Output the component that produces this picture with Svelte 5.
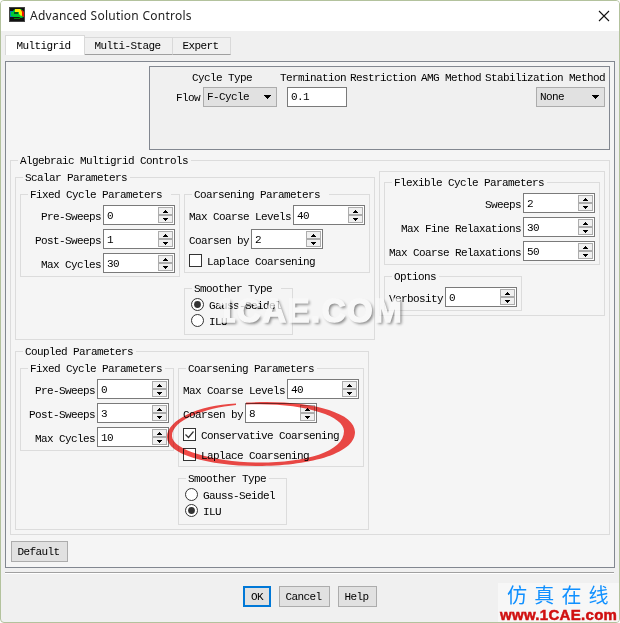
<script lang="ts">
  let activeTab = $state('Multigrid');
  const tabs = ['Multigrid', 'Multi-Stage', 'Expert'];

  let termination = $state('0.1');

  let scalar = $state({
    preSweeps: 0,
    postSweeps: 1,
    maxCycles: 30,
    maxCoarseLevels: 40,
    coarsenBy: 2,
    laplace: false,
    smoother: 'Gauss-Seidel'
  });

  let coupled = $state({
    preSweeps: 0,
    postSweeps: 3,
    maxCycles: 10,
    maxCoarseLevels: 40,
    coarsenBy: 8,
    conservative: true,
    laplace: false,
    smoother: 'ILU'
  });

  let flexible = $state({
    sweeps: 2,
    maxFine: 30,
    maxCoarse: 50,
    verbosity: 0
  });
</script>

{#snippet spinner(label: string, group: any, key: string)}
  <div class="row">
    <span class="label">{label}</span>
    <div class="spinner">
      <span class="value">{group[key]}</span>
      <div class="steps">
        <button aria-label="Increase {label}" onclick={() => group[key]++}>
          <svg width="5" height="3"><path d="M2 0h1v1h1v1h1v1H0V2h1V1h1z" /></svg>
        </button>
        <button aria-label="Decrease {label}" onclick={() => group[key]--}>
          <svg width="5" height="3"><path d="M0 0h5v1H4v1H3v1H2V2H1V1H0z" /></svg>
        </button>
      </div>
    </div>
  </div>
{/snippet}

{#snippet check(label: string, group: any, key: string)}
  <button class="option" onclick={() => (group[key] = !group[key])}>
    <svg class="box" width="13" height="13">
      <rect x="0.5" y="0.5" width="12" height="12" fill="#fff" stroke="#333" />
      {#if group[key]}
        <path d="M2.5 6.5l3 3 5-6" fill="none" stroke="#333" stroke-width="1.2" />
      {/if}
    </svg>
    <span>{label}</span>
  </button>
{/snippet}

{#snippet smootherType(group: any)}
  <fieldset class="smoother">
    <legend>Smoother Type</legend>
    {#each ['Gauss-Seidel', 'ILU'] as type}
      <button class="option" onclick={() => (group.smoother = type)}>
        <svg width="13" height="13">
          <circle cx="6.5" cy="6.5" r="6" fill="#fff" stroke="#333" />
          {#if group.smoother === type}
            <circle cx="6.5" cy="6.5" r="3.4" fill="#333" />
          {/if}
        </svg>
        <span>{type}</span>
      </button>
    {/each}
  </fieldset>
{/snippet}

{#snippet fixedCycle(group: any)}
  <fieldset class="fixed">
    <legend>Fixed Cycle Parameters</legend>
    <div class="rows end">
      {@render spinner('Pre-Sweeps', group, 'preSweeps')}
      {@render spinner('Post-Sweeps', group, 'postSweeps')}
      {@render spinner('Max Cycles', group, 'maxCycles')}
    </div>
  </fieldset>
{/snippet}

<div class="window">
  <header>
    <svg class="app-icon" width="16" height="15">
      <rect width="16" height="15" fill="#444" />
      <rect x="1" y="1" width="14" height="13" fill="#111" />
      <path d="M1 4h3l2-2h6l3 3v5l-3 1-2-1H4L1 9z" fill="#0c3" />
      <path d="M1 4h3v1H2v4h2v1H1z" fill="#08a" />
      <path d="M6 2h5l3 3v3l-2 1-2-2V5H6z" fill="#fe0" />
      <path d="M12 3h1l2 2v5l-2-1 0-4z" fill="#e10" />
      <path d="M5 5h4v2H5z" fill="#052" />
      <path d="M5 11h6v1H5z" fill="#080" />
    </svg>
    <h1>Advanced Solution Controls</h1>
    <button class="close" aria-label="Close">
      <svg width="12" height="12"><path d="M1 1l10 10M11 1L1 11" fill="none" stroke="#111" stroke-width="1.1" /></svg>
    </button>
  </header>

  <nav>
    {#each tabs as tab}
      <button class="tab" class:active={activeTab === tab} onclick={() => (activeTab = tab)}>{tab}</button>
    {/each}
  </nav>

  <main>
    <section class="methods">
      <div class="headings">
        <span class="cycle-type">Cycle Type</span>
        <span class="termination">Termination</span>
        <span class="restriction">Restriction</span>
        <span class="amg">AMG Method</span>
        <span>Stabilization Method</span>
      </div>
      <div class="controls">
        <span class="flow">Flow</span>
        <div class="select cycle">
          F-Cycle
          <svg width="7" height="4"><path d="M0 0h7v1H6v1H5v1H4v1H3V3H2V2H1V1H0z" /></svg>
        </div>
        <input bind:value={termination} aria-label="Termination" />
        <div class="select stabilization">
          None
          <svg width="7" height="4"><path d="M0 0h7v1H6v1H5v1H4v1H3V3H2V2H1V1H0z" /></svg>
        </div>
      </div>
    </section>

    <fieldset class="algebraic">
      <legend>Algebraic Multigrid Controls</legend>
      <div class="columns">
        <div class="left">
          <fieldset class="scalar">
            <legend>Scalar Parameters</legend>
            <div class="groups">
              {@render fixedCycle(scalar)}
              <div>
                <fieldset class="coarsening">
                  <legend>Coarsening Parameters</legend>
                  <div class="rows">
                    {@render spinner('Max Coarse Levels', scalar, 'maxCoarseLevels')}
                    {@render spinner('Coarsen by', scalar, 'coarsenBy')}
                    {@render check('Laplace Coarsening', scalar, 'laplace')}
                  </div>
                </fieldset>
                {@render smootherType(scalar)}
              </div>
            </div>
          </fieldset>

          <fieldset class="coupled">
            <legend>Coupled Parameters</legend>
            <div class="groups">
              {@render fixedCycle(coupled)}
              <div>
                <fieldset class="coarsening">
                  <legend>Coarsening Parameters</legend>
                  <div class="rows">
                    {@render spinner('Max Coarse Levels', coupled, 'maxCoarseLevels')}
                    {@render spinner('Coarsen by', coupled, 'coarsenBy')}
                    {@render check('Conservative Coarsening', coupled, 'conservative')}
                    {@render check('Laplace Coarsening', coupled, 'laplace')}
                  </div>
                </fieldset>
                {@render smootherType(coupled)}
              </div>
            </div>
          </fieldset>
        </div>

        <div class="right">
          <fieldset class="flexible">
            <legend>Flexible Cycle Parameters</legend>
            <div class="rows end">
              {@render spinner('Sweeps', flexible, 'sweeps')}
              {@render spinner('Max Fine Relaxations', flexible, 'maxFine')}
              {@render spinner('Max Coarse Relaxations', flexible, 'maxCoarse')}
            </div>
          </fieldset>
          <fieldset class="options">
            <legend>Options</legend>
            <div class="rows">
              {@render spinner('Verbosity', flexible, 'verbosity')}
            </div>
          </fieldset>
        </div>
      </div>
    </fieldset>

    <button class="push default">Default</button>
  </main>

  <footer>
    <button class="push ok">OK</button>
    <button class="push cancel">Cancel</button>
    <button class="push help">Help</button>
  </footer>

  <div class="watermark">1CAE.COM</div>
  <svg class="marker" width="190" height="66" viewBox="166 401 190 66">
    <path
      d="M246 402.6C304 399 355 411 355 432C355 455 305 466 258 466C210 466 167 455 167 437C167 420 198 405 236 403.4V405C205 408 172 420 172 436C172 450 215 462.5 260 462.5C305 462.5 344 452 344 431C344 415 300 402 246 404.6Z"
    />
  </svg>
  <div class="brand">
    <span class="name">仿真在线</span>
    <span class="site">www.1CAE.com</span>
  </div>
</div>

<style>
  :global(body) {
    background: #fff;
  }

  .window {
    position: relative;
    box-sizing: border-box;
    width: 620px;
    height: 623px;
    overflow: hidden;
    border: 1px solid #b3c29d;
    border-radius: 4px;
    background: #f0f0f0;
    color: #000;
    font: 11px/12px "Liberation Mono", "Courier New", monospace;
    letter-spacing: -0.6px;
    white-space: nowrap;
  }

  button,
  input {
    box-sizing: border-box;
    margin: 0;
    padding: 0;
    border: 0;
    background: none;
    color: inherit;
    font: inherit;
    letter-spacing: inherit;
  }

  svg {
    display: block;
    flex: none;
  }

  header {
    display: flex;
    align-items: center;
    height: 30px;
    padding: 0 9px 0 8px;
    background: #fff;
  }

  .app-icon {
    margin-bottom: 3px;
  }

  h1 {
    flex: 1;
    margin: 0 0 1px 5px;
    font: 12px/16px "Noto Sans", sans-serif;
    letter-spacing: 0.25px;
    color: #222;
  }

  nav {
    display: flex;
    align-items: flex-end;
    width: 228px;
    height: 20px;
    margin: 4px 0 0 4px;
    border-bottom: 0;
  }

  .tab {
    height: 18px;
    padding-right: 2px;
    border: 1px solid #d9d9d9;
    border-left: 0;
    border-bottom-color: #a0a0a0;
    width: 58px;
  }

  .tab:nth-child(2) {
    width: 88px;
  }

  .tab.active {
    width: 80px;
    height: 20px;
    padding-right: 3px;
    border-left: 1px solid #d9d9d9;
    border-bottom: 0;
    background: #fff;
  }

  main {
    box-sizing: border-box;
    width: 610px;
    height: 507px;
    margin: 6px 0 0 4px;
    border: 1px solid #828790;
    background: #f5f5f5;
  }

  .methods {
    box-sizing: border-box;
    width: 461px;
    height: 84px;
    margin: 4px 0 0 143px;
    padding-top: 5px;
    border: 1px solid #828790;
    background: #f0f0f0;
  }

  .headings {
    display: flex;
    padding-left: 42px;
  }

  .cycle-type {
    width: 88px;
  }

  .termination {
    width: 70px;
  }

  .restriction {
    width: 71px;
  }

  .amg {
    width: 64px;
  }

  .controls {
    display: flex;
    align-items: center;
    margin-top: 3px;
    padding: 0 4px 0 26px;
  }

  .flow {
    width: 27px;
    padding-top: 2px;
  }

  .select {
    box-sizing: border-box;
    display: flex;
    align-items: center;
    justify-content: space-between;
    height: 20px;
    padding: 0 5px 0 3px;
    border: 1px solid #acacac;
    background: #e1e1e1;
  }

  .cycle {
    width: 74px;
  }

  .stabilization {
    width: 69px;
    margin-left: auto;
  }

  input {
    width: 60px;
    height: 20px;
    margin-left: 10px;
    padding-left: 3px;
    border: 1px solid #7a7a7a;
    background: #fff;
  }

  fieldset {
    box-sizing: border-box;
    min-width: 0;
    margin: 0;
    padding: 0;
    border: 1px solid #dcdcdc;
  }

  legend {
    height: 11px;
    margin-left: 7px;
    padding: 0 3px 0 2px;
    line-height: 12px;
  }

  .algebraic {
    width: 600px;
    height: 380px;
    margin: 5px 0 0 4px;
  }

  .columns {
    display: flex;
    padding-left: 4px;
    gap: 4px;
  }

  .left {
    width: 360px;
    padding-top: 6px;
  }

  .scalar {
    height: 168px;
  }

  .scalar .groups legend {
    padding-right: 9px;
  }

  .coupled {
    width: 354px;
    height: 184px;
    margin-top: 6px;
  }

  .groups {
    display: flex;
    gap: 4px;
    padding: 6px 0 0 4px;
  }

  .fixed {
    width: 160px;
    height: 88px;
  }

  .coupled .fixed {
    width: 154px;
  }

  .coarsening {
    width: 186px;
    height: 84px;
  }

  .coupled .coarsening {
    height: 104px;
  }

  .smoother {
    width: 109px;
    height: 52px;
    margin-top: 10px;
  }

  .coupled .smoother {
    margin-top: 6px;
  }

  .smoother legend {
    margin-bottom: 4px;
  }

  .smoother .option {
    margin-left: 6px;
  }

  .rows {
    display: flex;
    flex-direction: column;
    align-items: flex-start;
    gap: 4px;
    padding: 5px 4px 0;
  }

  .rows.end {
    align-items: flex-end;
  }

  .row {
    display: flex;
    gap: 2px;
  }

  .label {
    padding-top: 6px;
  }

  .spinner {
    box-sizing: border-box;
    display: flex;
    justify-content: space-between;
    width: 72px;
    height: 20px;
    padding: 1px;
    border: 1px solid #7a7a7a;
    background: #fff;
  }

  .value {
    padding: 3px 0 0 2px;
  }

  .steps {
    display: flex;
    flex-direction: column;
    width: 15px;
  }

  .steps button {
    display: flex;
    align-items: center;
    justify-content: center;
    height: 8px;
    border: 1px solid #acacac;
    background: #f0f0f0;
  }

  .option {
    display: flex;
    align-items: flex-start;
    gap: 5px;
    height: 16px;
  }

  .option span {
    padding-top: 2px;
  }

  .rows .option {
    padding-top: 1px;
  }

  .right {
    box-sizing: border-box;
    width: 226px;
    height: 145px;
    margin-top: 5px;
    padding: 5px 0 0 4px;
    border: 1px solid #dcdcdc;
  }

  .flexible {
    width: 216px;
    height: 88px;
  }

  .options {
    width: 138px;
    height: 40px;
    margin-top: 6px;
  }

  .push {
    height: 21px;
    border: 1px solid #acacac;
    background: #e1e1e1;
  }

  .default {
    display: block;
    width: 57px;
    margin: 6px 0 0 5px;
    padding-right: 2px;
  }

  footer {
    display: flex;
    gap: 8px;
    width: 371px;
    height: 36px;
    margin: 4px 0 0 4px;
    padding: 13px 0 0 238px;
    border-top: 1px solid #a0a0a0;
    box-shadow: inset 0 1px #fff;
  }

  .ok {
    width: 28px;
    border: 2px solid #0078d7;
  }

  .cancel {
    width: 51px;
    padding-right: 2px;
  }

  .help {
    width: 39px;
    padding-right: 2px;
  }

  .watermark {
    position: absolute;
    top: 291px;
    left: 216px;
    font: bold 33px/38px "Liberation Sans", Arial, sans-serif;
    letter-spacing: 1.5px;
    color: #fafafa;
    -webkit-text-stroke: 1.4px #fafafa;
    text-shadow: 2px 2px 3px rgba(0, 0, 0, 0.6);
    opacity: 0.75;
    pointer-events: none;
  }

  .marker {
    position: absolute;
    top: 400px;
    left: 165px;
    fill: #f24a47;
    mix-blend-mode: multiply;
    pointer-events: none;
  }

  .brand {
    position: absolute;
    right: 0;
    bottom: 0;
    display: flex;
    flex-direction: column;
    width: 121px;
    height: 39px;
    background: #f7f7f7;
  }

  .name {
    padding-left: 9px;
    font: 20px/23px "Noto Sans CJK SC", sans-serif;
    letter-spacing: 7.2px;
    color: #1090ff;
  }

  .site {
    padding-left: 2px;
    font: bold 15px/17px "Liberation Sans", Arial, sans-serif;
    letter-spacing: 0.3px;
    color: #d01010;
    -webkit-text-stroke: 0.5px #d01010;
  }
</style>
